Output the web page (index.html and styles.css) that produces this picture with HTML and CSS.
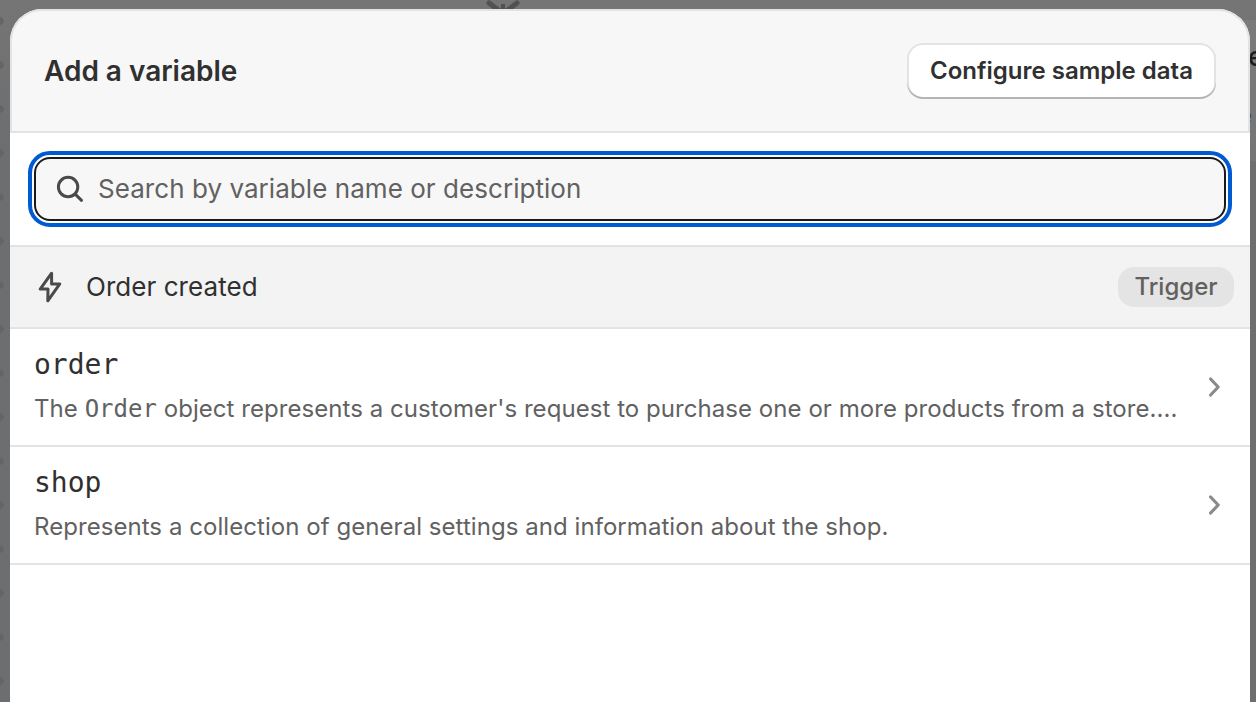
FILE: index.html
```html
<!DOCTYPE html>
<html lang="en">
<head>
<meta charset="utf-8">
<title>Add a variable</title>
<link rel="stylesheet" href="styles.css">
</head>
<body>
<div class="backdrop" aria-hidden="true">
  <svg class="arrow" width="36" height="12" viewBox="0 0 36 12"><path d="M4 3 16 12M32 3 20 12" fill="none" stroke="#505152" stroke-width="5" stroke-linecap="round"/><path d="M16 4h4v8h-4z" fill="#505152"/></svg>
  <div class="card"></div>
  <span class="peek peek-title">e</span>
  <span class="peek peek-text">e</span>
</div>
<main class="modal">
  <header class="header">
    <h1 class="title">Add a variable</h1>
    <button class="button" type="button"><span class="button-label">Configure sample data</span></button>
  </header>
  <div class="search-area">
    <label class="search">
      <svg class="search-icon" width="28" height="28" viewBox="0 0 28 28"><g fill="none" stroke="#4a4a4a" stroke-width="3" stroke-linecap="round"><circle cx="12.1" cy="12" r="9.7"/><path d="M19.2 19.2 25.5 25.3"/></g></svg>
      <input class="search-input" type="text" placeholder="Search by variable name or description">
    </label>
  </div>
  <section class="source">
    <svg class="bolt" width="24" height="32" viewBox="0 0 24 32"><path d="M13.6 2.2 2.2 18.1H10L9.8 29.8 21.8 12.9H13.6Z" fill="none" stroke="#4a4a4a" stroke-width="3" stroke-linejoin="round"/></svg>
    <span class="source-name">Order created</span>
    <span class="badge"><span class="badge-label">Trigger</span></span>
  </section>
  <ul class="list">
    <li class="row">
      <div class="row-body">
        <code class="name">order</code>
        <p class="description"><span class="order-text">The <code>Order</code> object represents a customer's request to purchase one or more products from a store....</span></p>
      </div>
      <svg class="chevron" width="14" height="22" viewBox="0 0 14 22"><path d="M2.6 3 10.2 11 2.6 19" fill="none" stroke="#8a8a8a" stroke-width="3.2" stroke-linecap="round" stroke-linejoin="round"/></svg>
    </li>
    <li class="row">
      <div class="row-body">
        <code class="name">shop</code>
        <p class="description"><span class="shop-text">Represents a collection of general settings and information about the shop.</span></p>
      </div>
      <svg class="chevron" width="14" height="22" viewBox="0 0 14 22"><path d="M2.6 3 10.2 11 2.6 19" fill="none" stroke="#8a8a8a" stroke-width="3.2" stroke-linecap="round" stroke-linejoin="round"/></svg>
    </li>
  </ul>
</main>
</body>
</html>
```
FILE: styles.css
```css
* { box-sizing: border-box; }
body {
  margin: 0;
  height: 702px;
  overflow: hidden;
  padding: 9px 6px 0 10px;
  background: #6d6e70;
  color: #303030;
  font-family: Inter, "Liberation Sans", sans-serif;
}
.backdrop {
  position: absolute;
  inset: 0;
  overflow: hidden;
  background:
    radial-gradient(circle at 0 21px, #646567 3.5px, transparent 4px) 0 0 / 44px 44px,
    linear-gradient(#757575, #6d6e70 150px);
}
.arrow { position: absolute; left: 485px; top: 0; }
.card {
  position: absolute;
  right: 0;
  top: 20px;
  width: 60px;
  height: 141px;
  background: linear-gradient(#7b7b7b, #747576);
}
.peek { position: absolute; color: #1c1c1c; line-height: 1; }
.peek-title { left: 1248px; top: 43px; font-size: 27px; font-weight: 500; }
.peek-text { left: 1237.5px; top: 103px; font-size: 25px; color: #3a3a3a; }
.modal {
  position: relative;
  width: 1240px;
  height: 693px;
  overflow: hidden;
  border-radius: 32px 32px 0 0;
  background: #fff;
}
.header {
  display: flex;
  align-items: center;
  justify-content: space-between;
  height: 124px;
  padding: 0 32px;
  border: 2px solid #e3e3e3;
  border-radius: 32px 32px 0 0;
  background: #f7f7f7;
}
.title {
  margin: 0;
  font-size: 28px;
  line-height: 40px;
  font-weight: 630;
  letter-spacing: -0.02px;
  white-space: nowrap;
}
.button {
  width: 309px;
  height: 56px;
  padding: 0;
  border: 0;
  border-radius: 16px;
  background: #fff;
  box-shadow: inset 0 -2px 0 #b5b5b5, inset 0 0 0 2px #e3e3e3;
  color: #303030;
  font: 560 24px/40px Inter, sans-serif;
  white-space: nowrap;
}
.search-area { padding: 24px; height: 112px; }
.search {
  display: flex;
  align-items: center;
  gap: 14px;
  height: 64px;
  padding: 0 20px;
  border: 2px solid #1a1a1a;
  border-radius: 16px;
  background: #f7f7f7;
  outline: 4px solid #005bd3;
  outline-offset: 2px;
}
.search-input {
  flex: 1;
  padding: 0;
  border: 0;
  outline: 0;
  background: none;
  font: 400 26px/40px Inter, sans-serif;
  letter-spacing: 0.05px;
}
.search-input::placeholder { color: #616161; opacity: 1; }
.source {
  display: flex;
  align-items: center;
  height: 84px;
  padding: 0 16px 0 28px;
  border: solid #e3e3e3;
  border-width: 2px 0;
  background: #f3f3f3;
}
.source-name { margin-left: 24px; font-size: 26px; line-height: 40px; letter-spacing: 0.05px; }
.badge {
  display: flex;
  align-items: center;
  justify-content: center;
  margin-left: auto;
  width: 116px;
  height: 40px;
  padding-bottom: 2px;
  border-radius: 16px;
  background: #e4e4e4;
  color: #616161;
  font-size: 24px;
  font-weight: 550;
}
.list { margin: 0; padding: 0; list-style: none; }
.row {
  display: flex;
  align-items: center;
  justify-content: space-between;
  height: 118px;
  padding: 0 28px 0 24px;
  border-bottom: 2px solid #e3e3e3;
}
code { font-family: "DejaVu Sans Mono", monospace; }
.name { display: block; font-size: 28px; line-height: 40px; }
.description {
  margin: 4px 0 0;
  color: #616161;
  font-size: 24px;
  line-height: 40px;
  letter-spacing: 0.055px;
  white-space: nowrap;
}
.description code { letter-spacing: 0; }
```
